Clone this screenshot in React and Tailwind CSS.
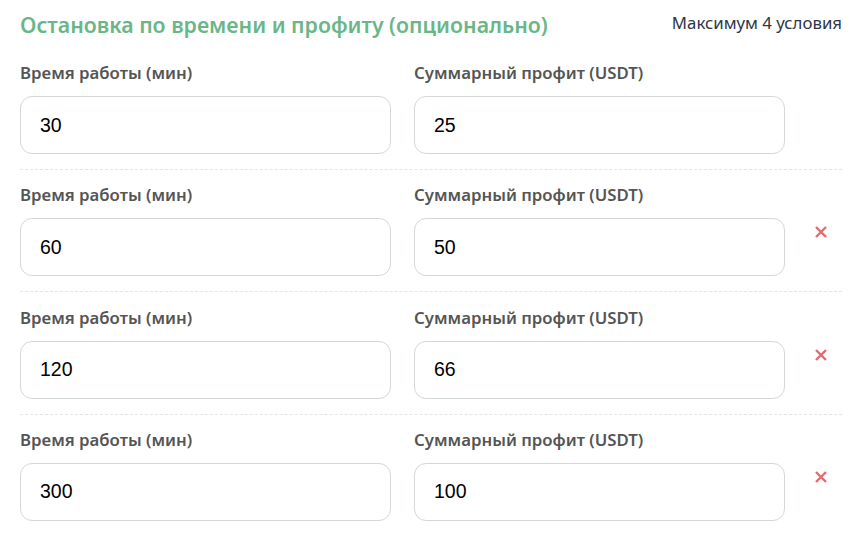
import React, { useState } from 'react'

const initialRows = [
  { minutes: '30', profit: '25' },
  { minutes: '60', profit: '50' },
  { minutes: '120', profit: '66' },
  { minutes: '300', profit: '100' },
]

function CrossIcon() {
  return (
    <svg width="12" height="12" viewBox="0 0 12 12" fill="none">
      <path d="M1 1L11 11M11 1L1 11" stroke="#e46c6c" strokeWidth="2.4" strokeLinecap="butt" />
    </svg>
  )
}

export default function App() {
  const [rows, setRows] = useState(initialRows)

  const update = (i, key, value) => {
    setRows(rows.map((r, idx) => (idx === i ? { ...r, [key]: value } : r)))
  }

  const remove = (i) => setRows(rows.filter((_, idx) => idx !== i))

  return (
    <div className="min-h-screen bg-white pl-[20px] pr-[16px] pt-[10px] font-['Noto_Sans',sans-serif]">
      <div className="flex items-start justify-between">
        <h2 className="text-[21.3px] leading-[30px] font-semibold text-[#6ab687]">
          Остановка по времени и профиту (опционально)
        </h2>
        <span className="mt-[1px] text-[16.8px] leading-[24px] text-[#2d3748]">Максимум 4 условия</span>
      </div>

      <div className="mt-[21px]">
        {rows.map((row, i) => (
          <div
            key={i}
            className={i < rows.length - 1 ? 'border-b border-dashed border-[#e2e6e6] pb-[15px] mb-[13.33px]' : ''}
          >
            <div className="flex items-end">
              <div className="grid flex-1 grid-cols-2 gap-[23px]">
                <label className="block">
                  <span className="block text-[16.8px] leading-[24px] font-semibold text-[#555]">Время работы (мин)</span>
                  <input
                    value={row.minutes}
                    onChange={(e) => update(i, 'minutes', e.target.value)}
                    className="mt-[11px] h-[58px] w-full rounded-[12px] border border-[#d3d8d8] px-[19px] font-['Liberation_Sans',sans-serif] text-[19.5px] text-black outline-none"
                  />
                </label>
                <label className="block">
                  <span className="block text-[16.8px] leading-[24px] font-semibold text-[#555]">Суммарный профит (USDT)</span>
                  <input
                    value={row.profit}
                    onChange={(e) => update(i, 'profit', e.target.value)}
                    className="mt-[11px] h-[58px] w-full rounded-[12px] border border-[#d3d8d8] px-[19px] font-['Liberation_Sans',sans-serif] text-[19.5px] text-black outline-none"
                  />
                </label>
              </div>
              <div className="flex h-[58px] w-[57px] items-center justify-center pl-[15px]">
                {i > 0 && (
                  <button onClick={() => remove(i)} className="mb-[30px] flex items-center justify-center">
                    <CrossIcon />
                  </button>
                )}
              </div>
            </div>
          </div>
        ))}
      </div>
    </div>
  )
}
